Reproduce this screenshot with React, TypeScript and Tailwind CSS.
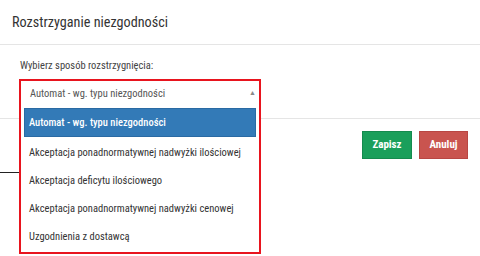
const options = [
    'Automat - wg. typu niezgodności',
    'Akceptacja ponadnormatywnej nadwyżki ilościowej',
    'Akceptacja deficytu ilościowego',
    'Akceptacja ponadnormatywnej nadwyżki cenowej',
    'Uzgodnienia z dostawcą',
]

const FONT = "font-['Roboto_Condensed','Liberation_Sans_Narrow',Roboto,sans-serif]"

export default function App() {
    return (
        <div className={`relative h-[256px] w-[480px] overflow-hidden bg-white ${FONT}`}>
            <div className="flex h-[45px] items-center border-b border-[#e5e5e5] px-3 pt-px text-[14.2px] text-[#333]">
                Rozstrzyganie niezgodności
            </div>
            <div className="h-[73px] px-5 pt-[13px]">
                <div className="text-[10.5px] leading-[16px] text-[#444]">Wybierz sposób rozstrzygnięcia:</div>
                <div className="relative mt-[5px] h-[30px]">
                    <div className="absolute top-0 -left-px z-10 flex w-[242px] flex-col border-2 border-[#e8141e] bg-white">
                        <div className="flex h-[27px] items-center justify-between pr-[3px] pb-[2px] pl-[9px] text-[10.5px] whitespace-nowrap text-[#555]">
                            <span>{options[0]}</span>
                            <span className="text-[7px] text-[#888]">▲</span>
                        </div>
                        <div className="flex flex-col px-[3px] pb-px">
                            {options.map((opt, i) => (
                                <div
                                    key={opt}
                                    className={
                                        i === 0
                                            ? 'mb-[2px] flex h-[29px] items-center border border-[#2a6aa3] bg-[#337ab7] px-[4px] text-[10.5px] font-medium whitespace-nowrap text-white'
                                            : 'flex h-[28px] items-center px-[5px] text-[10.5px] whitespace-nowrap text-[#333]'
                                    }
                                >
                                    {opt}
                                </div>
                            ))}
                        </div>
                    </div>
                </div>
            </div>
            <div className="border-t border-[#e5e5e5]">
                <div className="flex justify-end gap-[7px] pt-[12px] pr-[12px]">
                    <button className="h-[28px] w-[50px] border border-[#158a4e] bg-[#1a9f5b] text-[11px] font-bold text-white">
                        Zapisz
                    </button>
                    <button className="h-[28px] w-[49px] border border-[#b84643] bg-[#c9544f] text-[11px] font-bold text-white">
                        Anuluj
                    </button>
                </div>
                <div className="mt-[13px] h-px w-[19px] bg-[#222]" />
            </div>
        </div>
    )
}
